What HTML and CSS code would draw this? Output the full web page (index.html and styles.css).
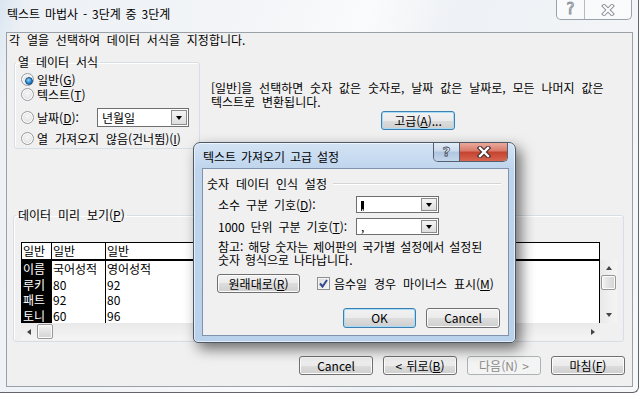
FILE: index.html
```html
<!DOCTYPE html>
<html lang="ko">
<head>
  <meta charset="UTF-8">
  <title>텍스트 마법사 - 3단계 중 3단계</title>
  <link rel="stylesheet" href="styles.css">
</head>
<body>
  <div class="window">
    <div class="titlebar">
      <div class="title">텍스트 마법사 - 3단계 중 3단계</div>
      <div class="caption">
        <span class="cap-help">?</span>
        <span class="cap-close">
          <svg width="16" height="12" viewBox="0 0 16 12">
            <path d="M4 2 L12 10 M12 2 L4 10" stroke="#8c939c" stroke-width="4" stroke-linecap="square"/>
            <path d="M4 2 L12 10 M12 2 L4 10" stroke="#fff" stroke-width="2" stroke-linecap="square"/>
          </svg>
        </span>
      </div>
    </div>

    <div class="client">
      <p class="intro">각 열을 선택하여 데이터 서식을 지정합니다.</p>

      <div class="top-row">
        <fieldset class="group format-group">
          <legend>열 데이터 서식</legend>
          <div class="radio-row"><span class="radio checked"></span><span>일반(<u>G</u>)</span></div>
          <div class="radio-row"><span class="radio"></span><span>텍스트(<u>T</u>)</span></div>
          <div class="radio-row date-row">
            <span class="radio"></span><span>날짜(<u>D</u>):</span>
            <div class="combo date-combo"><span class="combo-text">년월일</span><span class="drop"></span></div>
          </div>
          <div class="radio-row skip-row"><span class="radio"></span><span>열 가져오지 않음(건너뜀)(<u>I</u>)</span></div>
        </fieldset>

        <div class="info">
          <p>[일반]을 선택하면 숫자 값은 숫자로, 날짜 값은 날짜로, 모든 나머지 값은<br>텍스트로 변환됩니다.</p>
          <button class="btn focus adv-btn">고급(<u>A</u>)...</button>
        </div>
      </div>

      <fieldset class="group preview-group">
        <legend>데이터 미리 보기(<u>P</u>)</legend>
        <div class="preview">
          <div class="grid">
            <div class="grid-head">
              <span class="c1">일반</span><span class="c2">일반</span><span class="c3">일반</span>
            </div>
            <div class="grid-row"><span class="c1">이름</span><span class="c2">국어성적</span><span class="c3">영어성적</span></div>
            <div class="grid-row"><span class="c1">루키</span><span class="c2">80</span><span class="c3">92</span></div>
            <div class="grid-row"><span class="c1">패트</span><span class="c2">92</span><span class="c3">80</span></div>
            <div class="grid-row"><span class="c1">토니</span><span class="c2">60</span><span class="c3">96</span></div>
          </div>
          <div class="vscroll">
            <span class="arrow-up"></span>
            <span class="thumb vthumb"></span>
            <span class="arrow-down"></span>
          </div>
          <div class="hscroll">
            <span class="arrow-left"></span>
            <span class="thumb hthumb"></span>
            <span class="arrow-right"></span>
          </div>
        </div>
      </fieldset>

      <div class="buttons">
        <button class="btn">Cancel</button>
        <button class="btn">&lt; 뒤로(<u>B</u>)</button>
        <button class="btn disabled">다음(N) &gt;</button>
        <button class="btn">마침(<u>F</u>)</button>
      </div>
    </div>
  </div>

  <div class="dialog">
    <div class="dlg-titlebar">
      <div class="title">텍스트 가져오기 고급 설정</div>
      <div class="dlg-caption">
        <span class="dlg-help">?</span>
        <span class="dlg-close">
          <svg width="16" height="12" viewBox="0 0 16 12">
            <path d="M4 2 L12 10 M12 2 L4 10" stroke="#3a2a28" stroke-width="4.5" stroke-linecap="square"/>
            <path d="M4 2 L12 10 M12 2 L4 10" stroke="#fff" stroke-width="2.4" stroke-linecap="square"/>
          </svg>
        </span>
      </div>
    </div>
    <div class="dlg-client">
      <div class="section"><span>숫자 데이터 인식 설정</span><span class="section-line"></span></div>
      <div class="fields">
        <span>소수 구분 기호(<u>D</u>):</span>
        <div class="combo small-combo"><span class="combo-text"><span class="sel">.</span></span><span class="drop"></span></div>
        <span>1000 단위 구분 기호(<u>T</u>):</span>
        <div class="combo small-combo"><span class="combo-text">,</span><span class="drop"></span></div>
      </div>
      <p class="note">참고: 해당 숫자는 제어판의 국가별 설정에서 설정된<br>숫자 형식으로 나타납니다.</p>
      <div class="reset-row">
        <button class="btn reset-btn">원래대로(<u>R</u>)</button>
        <span class="checkbox">
          <svg width="11" height="11" viewBox="0 0 11 11">
            <path d="M2 5.5 L4.5 8.5 L9 2" fill="none" stroke="#33488e" stroke-width="2"/>
          </svg>
        </span>
        <span>음수일 경우 마이너스 표시(<u>M</u>)</span>
      </div>
      <div class="dlg-buttons">
        <button class="btn focus tall">OK</button>
        <button class="btn tall">Cancel</button>
      </div>
    </div>
  </div>
</body>
</html>
```

FILE: styles.css
```css
* {
  box-sizing: border-box;
}
body {
  margin: 0;
  width: 640px;
  height: 393px;
  overflow: hidden;
  position: relative;
  background: #fff;
  font-family: "Noto Sans CJK KR", sans-serif;
  font-size: 12px;
  line-height: 14px;
  word-spacing: 3.5px;
  color: #000;
}
u {
  text-decoration-thickness: 1px;
  text-underline-offset: 1px;
}

/* main window */
.window {
  width: 639px;
  height: 393px;
  padding-left: 6px;
  border-right: 1px solid #62666c;
  border-bottom: 1px solid #62666c;
  border-bottom-right-radius: 6px;
  background: linear-gradient(105deg, #dbe6f1 0, #edf1f5 4%, #f3f5f8 35%, #fafbfc 50%, #eef1f5 62%, #f5f7f9 100%);
}
.titlebar {
  height: 32px;
  display: flex;
  justify-content: space-between;
  align-items: flex-start;
  padding: 0 6px 0 1px;
}
.title {
  margin-top: 7px;
  line-height: 14px;
  word-spacing: 1.5px;
}
.caption {
  display: flex;
  height: 20px;
  border: 1px solid #9aa1aa;
  border-top: 0;
  border-radius: 0 0 5px 5px;
  background: rgba(255, 255, 255, 0.55);
}
.cap-help {
  width: 28px;
  border-right: 1px solid #b5bbc2;
  text-align: center;
  font-family: "DejaVu Sans", sans-serif;
  font-size: 15px;
  line-height: 19px;
  color: #fff;
  -webkit-text-stroke: 1px #8c939c;
}
.cap-close {
  width: 46px;
  display: flex;
  align-items: center;
  justify-content: center;
}

.client {
  width: 627px;
  height: 355px;
  border: 1px solid #9aa0a7;
  background: #f0f0f0;
  display: flex;
  flex-direction: column;
}
.intro {
  margin: 0;
  padding-left: 2px;
}
.top-row {
  display: flex;
  align-items: flex-start;
  margin-top: 8px;
}

/* group boxes */
.group {
  margin: 0;
  min-width: 0;
  border: 1px solid #d5dfe5;
  border-radius: 3px;
  box-shadow: inset 1px 1px 0 #fff;
}
.group legend {
  margin-left: -5px;
  padding: 0 2px;
  line-height: 14px;
}
.format-group {
  width: 186px;
  flex-shrink: 0;
  margin-left: 7px;
  padding: 3px 0 2px 6px;
}
.radio-row {
  display: flex;
  align-items: center;
  height: 15px;
  gap: 3px;
  white-space: nowrap;
}
.date-row {
  height: 19px;
  margin-top: 6px;
}
.skip-row {
  margin-top: 4px;
}
.radio {
  width: 13px;
  height: 13px;
  flex-shrink: 0;
  border-radius: 50%;
  border: 1px solid #979ba0;
  background: radial-gradient(circle at 50% 40%, #f7f7f7 0, #e4e4e4 60%, #d6d6d6 100%);
  box-shadow: inset 0 0 0 1px #fff;
  position: relative;
}
.radio.checked::after {
  content: "";
  position: absolute;
  left: 2.5px;
  top: 2.5px;
  width: 6px;
  height: 6px;
  border-radius: 50%;
  background: radial-gradient(circle at 40% 35%, #8fd6fa 0, #2a86cf 55%, #0e4f98 100%);
  border: 1px solid #174f85;
}

/* combo boxes */
.combo {
  display: flex;
  align-items: center;
  flex-shrink: 0;
  background: #fff;
  border: 1px solid #6f6f6f;
  padding: 1px;
}
.combo-text {
  flex: 1;
  padding-left: 3px;
  line-height: 14px;
}
.drop {
  width: 16px;
  align-self: stretch;
  border: 1px solid #8c8c8c;
  background: linear-gradient(#f4f4f4, #dedede);
  display: flex;
  align-items: center;
  justify-content: center;
}
.drop::after {
  content: "";
  border-left: 3.5px solid transparent;
  border-right: 3.5px solid transparent;
  border-top: 4px solid #000;
}
.date-combo {
  width: 92px;
  height: 19px;
  margin-left: auto;
  margin-right: 10px;
}

.info {
  margin-left: 11px;
  padding-top: 26px;
}
.info p {
  margin: 0;
  white-space: nowrap;
}
.adv-btn {
  display: block;
  margin: 2px 0 0 170px;
}

/* buttons */
.btn {
  width: 74px;
  height: 19px;
  padding: 0;
  border: 1px solid #707070;
  border-radius: 3px;
  background: linear-gradient(#f2f2f2 0, #ebebeb 50%, #dddddd 50%, #cfcfcf 100%);
  box-shadow: inset 0 0 0 1px #fcfcfc;
  font: inherit;
  line-height: 16px;
  word-spacing: 1px;
  color: #000;
}
.btn.focus {
  border-color: #3c7fb1;
  box-shadow: inset 0 0 0 1px #a6dcf7;
}
.btn.disabled {
  border-color: #adb2b5;
  background: #f4f4f4;
  box-shadow: none;
  color: #8a8a8a;
}
.btn.tall {
  height: 20px;
}

/* preview */
.preview-group {
  width: 611px;
  margin: 59px 0 0 6px;
  padding: 20px 6px 1px 7px;
}
.preview {
  display: grid;
  grid-template-columns: 579px 17px;
  grid-template-rows: 18px 63px 17px;
}
.grid {
  grid-column: 1;
  grid-row: 1 / 3;
  background: #fff;
  border: 1px solid #000;
  border-bottom: 0;
  overflow: hidden;
}
.grid-head,
.grid-row {
  display: flex;
  white-space: nowrap;
}
.grid-head {
  height: 18px;
  line-height: 16px;
  border-bottom: 2px solid #000;
}
.grid-row {
  height: 15px;
  line-height: 15px;
}
.grid-row:nth-child(even) {
  height: 16px;
}
.c1 {
  width: 29px;
  padding-left: 1px;
}
.grid-row .c1 {
  background: #000;
  color: #fff;
}
.c2 {
  width: 54px;
  border-left: 1px solid #000;
  padding-left: 1px;
}
.c3 {
  flex: 1;
  border-left: 1px solid #000;
  padding-left: 1px;
}
.vscroll {
  grid-column: 2;
  grid-row: 2;
  background: linear-gradient(90deg, #e9e9e9, #f5f5f5);
  display: flex;
  flex-direction: column;
  align-items: center;
}
.hscroll {
  grid-column: 1;
  grid-row: 3;
  background: linear-gradient(#e9e9e9, #f5f5f5);
  display: flex;
  align-items: center;
  padding: 0 5px 0 6px;
}
.thumb {
  border: 1px solid #979797;
  border-radius: 2px;
  background: linear-gradient(90deg, #f3f3f3, #e2e2e2 50%, #d4d4d4);
  box-shadow: inset 0 0 0 1px #fbfbfb;
}
.vthumb {
  width: 15px;
  height: 15px;
  margin-top: 5px;
}
.hthumb {
  width: 16px;
  height: 15px;
  margin-left: 6px;
  background: linear-gradient(#f3f3f3, #e2e2e2 50%, #d4d4d4);
}
.arrow-up {
  margin-top: 6px;
  border-left: 3.5px solid transparent;
  border-right: 3.5px solid transparent;
  border-bottom: 4px solid #444;
}
.arrow-down {
  margin-top: auto;
  margin-bottom: 6px;
  border-left: 3.5px solid transparent;
  border-right: 3.5px solid transparent;
  border-top: 4px solid #444;
}
.arrow-left {
  border-top: 3.5px solid transparent;
  border-bottom: 3.5px solid transparent;
  border-right: 4px solid #444;
}
.arrow-right {
  margin-left: auto;
  border-top: 3.5px solid transparent;
  border-bottom: 3.5px solid transparent;
  border-left: 4px solid #444;
}

.buttons {
  display: flex;
  justify-content: flex-end;
  gap: 10px;
  margin-top: 14px;
  padding-right: 7px;
}

/* advanced settings dialog, floating over the wizard */
.dialog {
  position: absolute;
  left: 193px;
  top: 142px;
  width: 323px;
  height: 201px;
  padding: 0 6px 6px 8px;
  border: 1px solid #4e5966;
  border-radius: 7px 7px 5px 5px;
  background: linear-gradient(#d3e3f4 0, #bfd5ed 26px, #b9d1ea 100%);
  box-shadow: inset 0 0 0 1px rgba(255, 255, 255, 0.6), 5px 6px 14px rgba(0, 0, 0, 0.55);
}
.dlg-titlebar {
  height: 25px;
  display: flex;
  justify-content: space-between;
  align-items: flex-start;
  padding: 0 1px 0 1px;
}
.dlg-caption {
  display: flex;
  height: 19px;
  border: 1px solid #53606e;
  border-top: 0;
  border-radius: 0 0 5px 5px;
  overflow: hidden;
}
.dlg-help {
  width: 26px;
  border-right: 1px solid #53606e;
  background: linear-gradient(#e3ecf7 0, #cbdaee 45%, #b0c5e0 50%, #c4d6ec 100%);
  text-align: center;
  font-family: "DejaVu Sans", sans-serif;
  font-weight: bold;
  font-size: 13px;
  line-height: 18px;
  color: #fff;
  -webkit-text-stroke: 0.8px #3e4a5a;
}
.dlg-close {
  width: 47px;
  display: flex;
  align-items: center;
  justify-content: center;
  background: linear-gradient(#eaa99b 0, #d8796a 45%, #c4422f 50%, #d7654f 100%);
}
.dlg-client {
  height: 168px;
  border: 1px solid #7f93ad;
  background: #f0f0f0;
}
.section {
  display: flex;
  align-items: center;
  gap: 6px;
  margin: 8px 7px 0 0;
  padding-left: 4px;
  white-space: nowrap;
}
.section-line {
  flex: 1;
  border-top: 1px solid #d5d5d5;
  border-bottom: 1px solid #fff;
}
.fields {
  display: grid;
  grid-template-columns: 138px 83px;
  grid-auto-rows: 17px;
  row-gap: 5px;
  align-items: center;
  margin-top: 5px;
  padding-left: 15px;
  white-space: nowrap;
  word-spacing: 2.5px;
}
.small-combo {
  height: 17px;
}
.small-combo .drop {
  width: 16px;
}
.sel {
  display: inline-block;
  background: #000;
  color: #fff;
  line-height: 10px;
  vertical-align: middle;
}
.note {
  margin: 5px 0 0;
  padding-left: 15px;
  line-height: 13px;
  white-space: nowrap;
  word-spacing: 1.5px;
}
.reset-row {
  display: flex;
  align-items: center;
  margin-top: 8px;
  padding-left: 14px;
  white-space: nowrap;
}
.reset-btn {
  width: 83px;
}
.checkbox {
  width: 13px;
  height: 13px;
  margin: 0 4px 0 17px;
  border: 1px solid #8e8f8f;
  background: linear-gradient(135deg, #dcdcdc, #f6f6f6);
  box-shadow: inset 0 0 0 1px #f4f4f4;
  display: flex;
  align-items: center;
  justify-content: center;
}
.dlg-buttons {
  display: flex;
  justify-content: flex-end;
  gap: 10px;
  margin-top: 15px;
  padding-right: 8px;
}
.dlg-buttons .btn:first-child {
  width: 73px;
}
```
